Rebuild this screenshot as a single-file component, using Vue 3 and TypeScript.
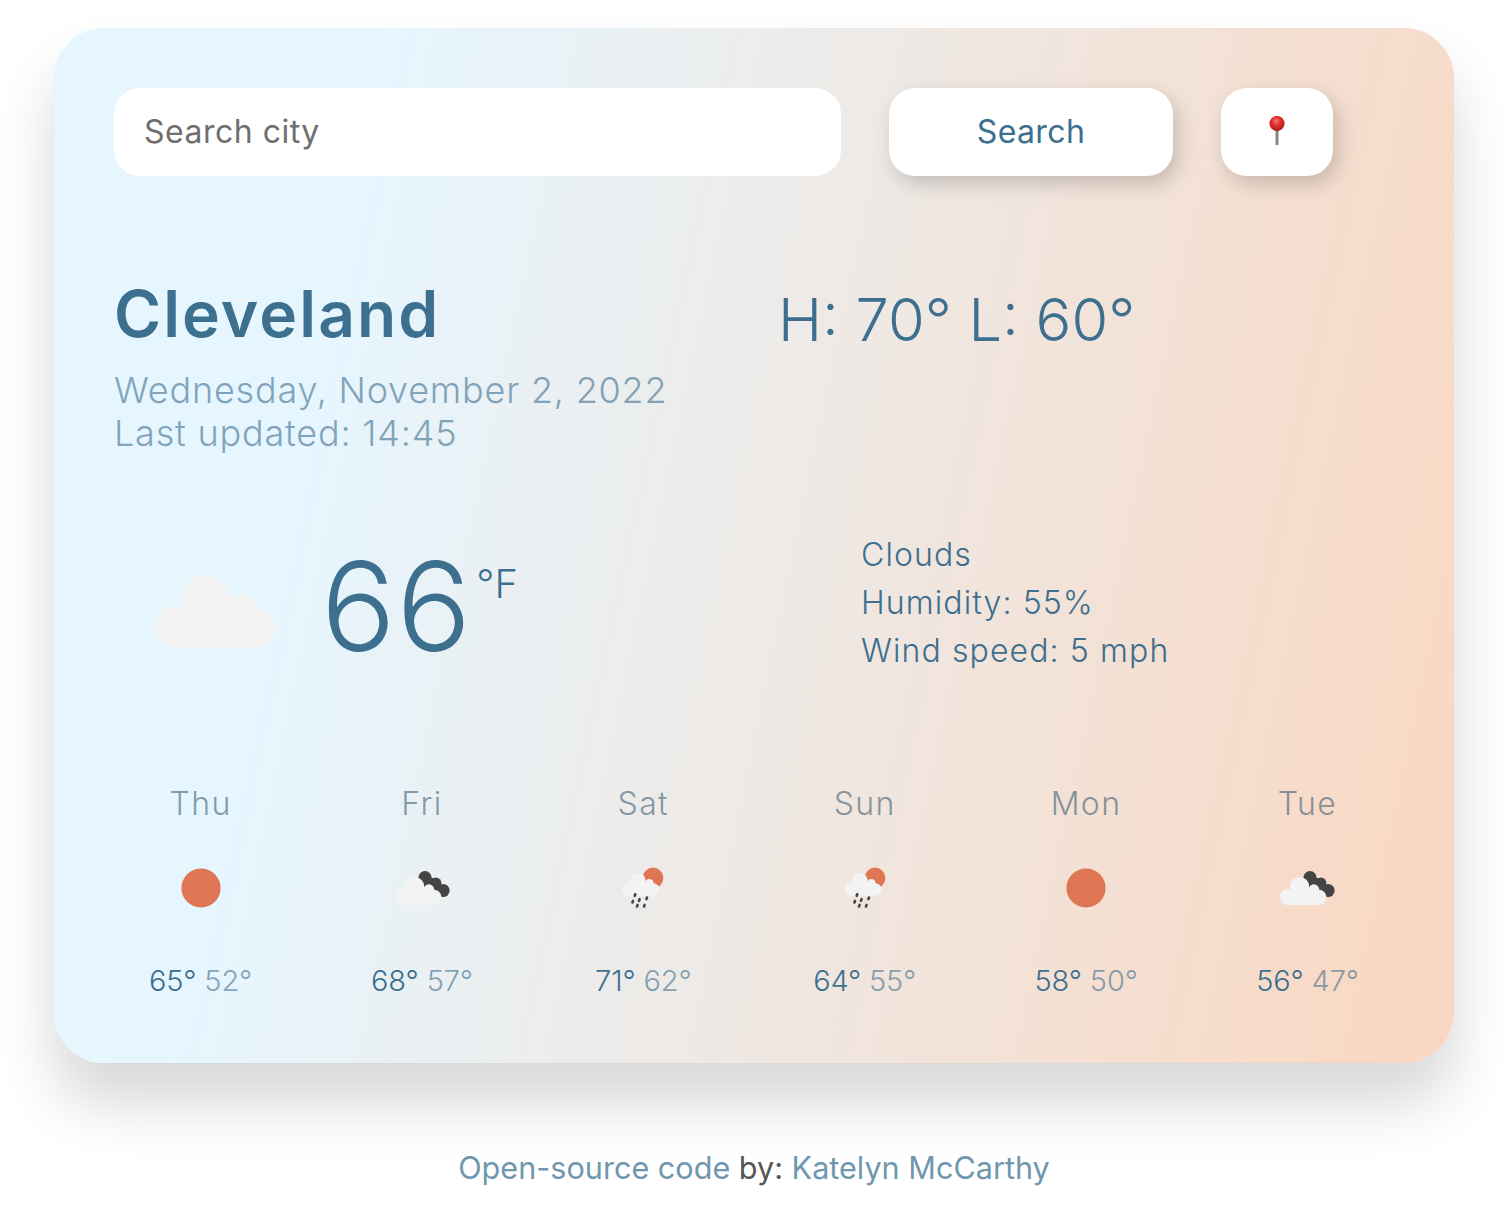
<script setup lang="ts">
interface Day { name: string; hi: number; lo: number; icon: 'sun' | 'clouds' | 'rain' }
const days: Day[] = [
  { name: 'Thu', hi: 65, lo: 52, icon: 'sun' },
  { name: 'Fri', hi: 68, lo: 57, icon: 'clouds' },
  { name: 'Sat', hi: 71, lo: 62, icon: 'rain' },
  { name: 'Sun', hi: 64, lo: 55, icon: 'rain' },
  { name: 'Mon', hi: 58, lo: 50, icon: 'sun' },
  { name: 'Tue', hi: 56, lo: 47, icon: 'clouds' },
]
const drops = [[22, 31], [19.7, 37.7], [26.3, 36], [33.7, 34.3], [24.3, 41.7], [31.3, 41.7]]
</script>

<template>
  <div class="page">
    <main class="card">
      <form class="search" @submit.prevent>
        <input class="search-input" type="text" placeholder="Search city" />
        <button class="btn btn-search" type="button">Search</button>
        <button class="btn btn-pin" type="button" aria-label="Use my location">
          <svg width="24" height="32" viewBox="0 0 24 32">
            <defs>
              <radialGradient id="pinHead" cx="45%" cy="35%" r="65%">
                <stop offset="0%" stop-color="#f4786f" />
                <stop offset="45%" stop-color="#df2f2c" />
                <stop offset="100%" stop-color="#b01b1e" />
              </radialGradient>
            </defs>
            <rect x="10.5" y="13" width="3" height="16" fill="#8b8580" />
            <circle cx="12" cy="7.5" r="7.6" fill="url(#pinHead)" />
          </svg>
        </button>
      </form>

      <section class="overview">
        <div>
          <h1 class="city">Cleveland</h1>
          <p class="date">Wednesday, November 2, 2022</p>
          <p class="date">Last updated: 14:45</p>
        </div>
        <div class="range">H: 70° L: 60°</div>
      </section>

      <section class="current">
        <div class="now">
          <svg class="main-icon" width="122" height="74" viewBox="0 0 122 74">
            <g fill="#f3f3f3">
              <circle cx="21" cy="52" r="21" /><circle cx="51" cy="25" r="25" />
              <circle cx="88" cy="33" r="14" /><circle cx="101" cy="53" r="20" />
              <rect x="21" y="50" width="80" height="23" /><rect x="40" y="30" width="50" height="30" />
            </g>
          </svg>
          <span class="temp">66</span>
          <span class="unit">°F</span>
        </div>
        <ul class="details">
          <li>Clouds</li>
          <li>Humidity: 55%</li>
          <li>Wind speed: 5 mph</li>
        </ul>
      </section>

      <section class="forecast">
        <div v-for="d in days" :key="d.name" class="day">
          <div class="day-name">{{ d.name }}</div>
          <svg class="day-icon" width="60" height="48" viewBox="0 0 60 48">
            <circle v-if="d.icon === 'sun'" cx="30" cy="24" r="19.6" fill="#df7653" />
            <template v-else-if="d.icon === 'clouds'">
              <g fill="#444">
                <circle cx="33" cy="13.7" r="6.6" /><circle cx="44" cy="19" r="5.4" />
                <circle cx="51" cy="26.5" r="6.6" /><path d="M28 12 46 15 50 32 34 30Z" />
              </g>
              <g transform="translate(3 13) scale(.385)" fill="#f3f3f3">
                <circle cx="21" cy="52" r="21" /><circle cx="51" cy="25" r="25" />
                <circle cx="88" cy="33" r="14" /><circle cx="101" cy="53" r="20" />
                <rect x="21" y="50" width="80" height="23" /><rect x="40" y="30" width="50" height="30" />
              </g>
            </template>
            <template v-else>
              <circle cx="40" cy="14" r="10.4" fill="#df7653" />
              <g transform="translate(9 9) scale(.31)" fill="#f3f3f3">
                <circle cx="21" cy="52" r="21" /><circle cx="51" cy="25" r="25" />
                <circle cx="88" cy="33" r="14" /><circle cx="101" cy="53" r="20" />
                <rect x="21" y="50" width="80" height="23" /><rect x="40" y="30" width="50" height="30" />
              </g>
              <line v-for="(p, i) in drops" :key="i" :x1="p[0] + 0.3" :y1="p[1] - 0.8" :x2="p[0] - 0.3" :y2="p[1] + 0.8"
                stroke="#444" stroke-width="2.6" stroke-linecap="round" />
            </template>
          </svg>
          <div class="day-temp">{{ d.hi }}° <span class="lo">{{ d.lo }}°</span></div>
        </div>
      </section>
    </main>
    <footer class="foot">
      <a href="#">Open-source code</a> by: <a href="#">Katelyn McCarthy</a>
    </footer>
  </div>
</template>

<style scoped>
.page {
  width: 1502px;
  height: 1216px;
  padding-top: 28px;
  box-sizing: border-box;
  overflow: hidden;
  font-family: Inter, "Liberation Sans", sans-serif;
  color: #3d6f8f;
}
.card {
  box-sizing: border-box;
  width: 1400px;
  height: 1035px;
  margin-left: 54px;
  padding: 60px 36px 0 60px;
  border-radius: 50px;
  background: linear-gradient(102deg, #e6f6ff 20%, #f9d8c3 96%);
  box-shadow: 0 40px 60px rgba(0, 0, 0, 0.16);
}
.search { display: flex; gap: 48px; margin: 0; }
.search-input {
  box-sizing: border-box;
  width: 727px;
  height: 88px;
  border: 0;
  border-radius: 26px;
  padding: 0 30px 2px;
  background: #fff;
  font: 400 32px Inter, sans-serif;
  letter-spacing: 0.5px;
  color: #666;
  outline: none;
}
.search-input::placeholder { color: #6f6f6f; opacity: 1; }
.btn {
  height: 88px;
  border: 0;
  border-radius: 26px;
  background: #fff;
  color: #3d6f8f;
  font: 400 32px Inter, sans-serif;
  letter-spacing: 0.4px;
  box-shadow: 5px 8px 20px rgba(0, 0, 0, 0.18);
  display: flex;
  align-items: center;
  justify-content: center;
  padding: 0 0 2px;
}
.btn-search { width: 284px; }
.btn-pin { width: 112px; padding: 0; }

.overview { display: flex; margin-top: 100px; }
.overview > div:first-child { width: 664px; }
.city {
  margin: 0 0 17px;
  font-size: 64px;
  line-height: 76px;
  font-weight: 600;
  letter-spacing: 2.1px;
}
.date {
  margin: 0;
  font-size: 36px;
  line-height: 43px;
  font-weight: 300;
  letter-spacing: 0.8px;
  opacity: 0.6;
}
.range {
  margin-top: 5px;
  font-size: 59.5px;
  line-height: 76px;
  font-weight: 300;
}
.current { display: flex; margin-top: 76px; }
.now { display: flex; width: 747px; height: 144px; align-items: flex-start; }
.main-icon { margin: 44px 44px 0 41px; flex: none; }
.temp { font-size: 124px; line-height: 144px; font-weight: 300; margin-top: 3px; letter-spacing: 1px; }
.unit { font-size: 40px; line-height: 46px; margin: 30px 0 0 4px; font-weight: 300; }
.details { list-style: none; margin: 0; padding: 0; font-size: 32px; line-height: 48px; font-weight: 350; letter-spacing: 1.1px; }

.forecast {
  display: grid;
  grid-template-columns: repeat(6, 221.4px);
  margin: 109px 0 0 -24.2px;
}
.day { display: flex; flex-direction: column; align-items: center; }
.day-name { font-size: 32px; line-height: 40px; font-weight: 300; letter-spacing: 1.4px; opacity: 0.6; color: #3d5f75; }
.day-icon { margin-top: 40px; }
.day-temp { margin-top: 49px; font-size: 29px; line-height: 40px; font-weight: 350; letter-spacing: -0.15px; }
.lo { opacity: 0.6; }
.foot {
  margin-top: 85px;
  padding-left: 6px;
  text-align: center;
  font-size: 30.6px;
  line-height: 40px;
  color: #555;
}
.foot a { color: #6f97ae; text-decoration: none; }
</style>
